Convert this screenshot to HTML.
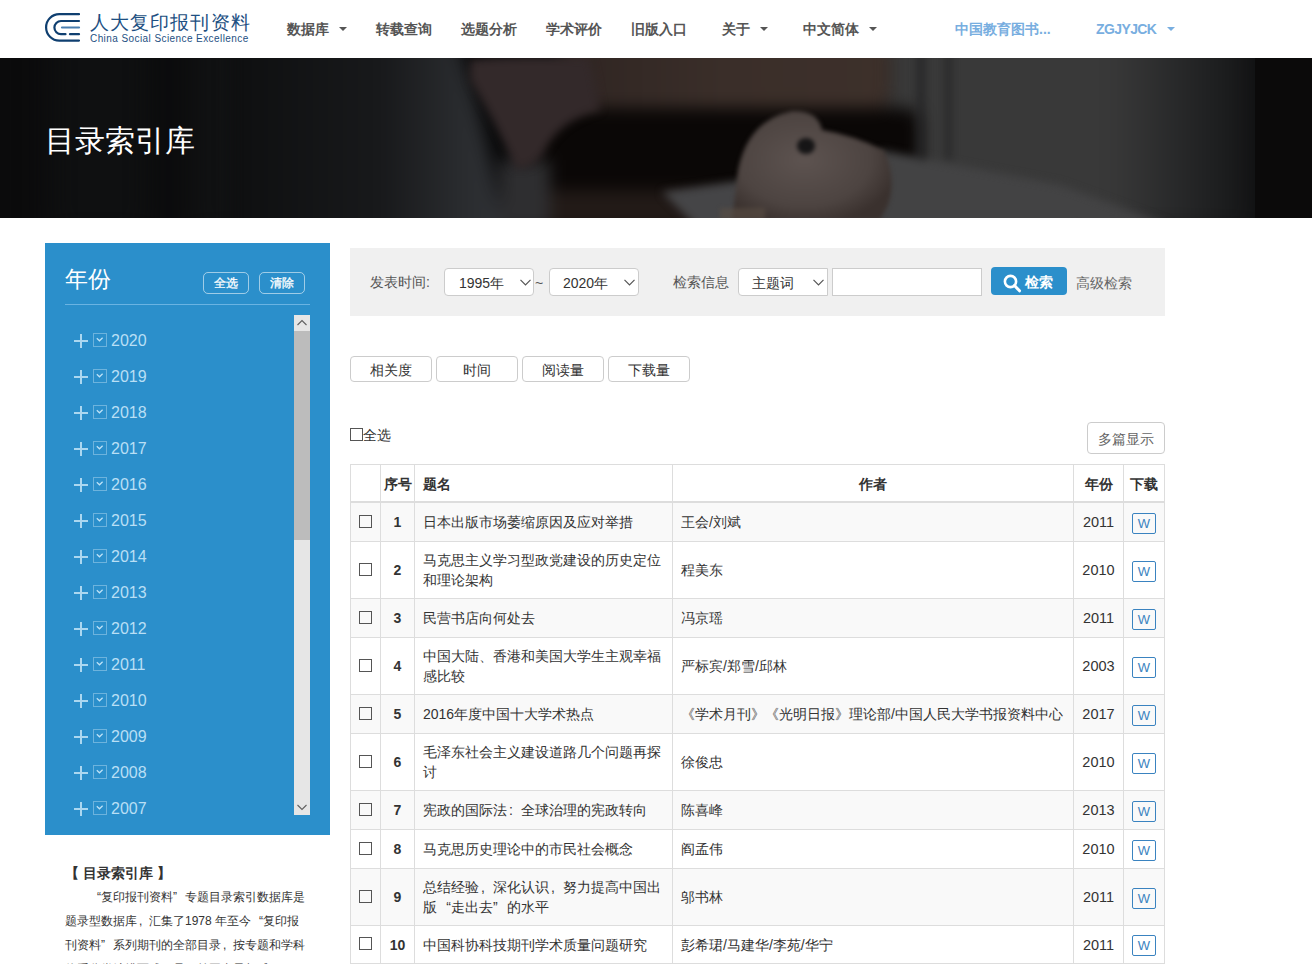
<!DOCTYPE html>
<html><head><meta charset="utf-8">
<style>
*{box-sizing:border-box;margin:0;padding:0}
html,body{width:1312px;height:964px;overflow:hidden;background:#fff}
body{font-family:"Liberation Sans",sans-serif;font-size:14px;color:#333;position:relative}
.abs{position:absolute;white-space:nowrap}
/* header */
.nav{position:absolute;top:20px;font-size:14px;font-weight:bold;color:#555;line-height:18px;white-space:nowrap}
.caret{display:inline-block;position:absolute;top:7px;width:0;height:0;border-top:4px solid #555;border-left:4px solid transparent;border-right:4px solid transparent}
/* banner */
#banner{position:absolute;left:0;top:58px;width:1312px;height:160px;overflow:hidden;background:#111}
/* panel */
#panel{position:absolute;left:45px;top:243px;width:285px;height:592px;background:#2b8fcb}
.pbtn{position:absolute;top:29px;width:46px;height:22px;border:1px solid rgba(255,255,255,.55);border-radius:5px;color:#fff;font-size:12px;line-height:20px;text-align:center;-webkit-text-stroke:0.3px #fff}
.yr{position:absolute;left:29px;height:20px}
.yr .plus{position:absolute;left:0;top:3px;width:14px;height:14px}
.yr .plus:before{content:"";position:absolute;left:0;top:6px;width:14px;height:2px;background:#abd7f0}
.yr .plus:after{content:"";position:absolute;left:6px;top:0;width:2px;height:14px;background:#abd7f0}
.yr .cb{position:absolute;left:19px;top:2px;width:14px;height:14px;border:1px solid rgba(190,225,245,.45)}
.yr .t{position:absolute;left:37px;top:0px;font-size:16px;line-height:20px;color:#b9dff5}
/* search */
#sbox{position:absolute;left:350px;top:248px;width:815px;height:68px;background:#f0f0f0}
.sel{position:absolute;top:20px;height:28px;background:#fff;border:1px solid #ccc;border-radius:4px;font-size:14px;color:#333;line-height:28px}
.chev{position:absolute;top:10px;width:11px;height:7px}
.sbtn{position:absolute;top:356px;width:82px;height:26px;border:1px solid #ccc;border-radius:4px;background:#fff;text-align:center;font-size:14px;line-height:27px;color:#333}
/* table */
#tbl{position:absolute;left:350px;top:464px;border-collapse:collapse;table-layout:fixed;width:814px}
#tbl td,#tbl th{border:1px solid #ddd;padding:0 8px;font-size:14px;line-height:20px;color:#333;vertical-align:middle}
#tbl th{font-weight:bold;padding-top:3px !important;border-bottom:2px solid #ddd}
#tbl tr.s td{background:#f9f9f9}
#tbl td.c{text-align:center}
.lq{display:inline-block;width:1em;text-align:right}
.rq{display:inline-block;width:1em;text-align:left}
.pc{display:inline-block;width:1em;text-align:left;padding-left:2px}
.rcb{display:inline-block;width:13px;height:13px;border:1px solid #555;vertical-align:middle;position:relative;top:-2px}
.w{display:inline-block;position:relative;top:1px;width:24px;height:21px;border:1px solid #3a83c0;border-radius:2px;color:#3a83c0;font-size:13px;line-height:19px;text-align:center;vertical-align:middle}
</style></head><body>

<!-- header -->
<svg class="abs" style="left:43px;top:10px" width="40" height="36" viewBox="43 10 40 36">
 <g fill="none" stroke="#0f3f70" stroke-width="2.2" stroke-linecap="round">
  <path d="M79 14.2 H59.3 A13.2 13.2 0 0 0 59.3 40.6 H79"/>
  <path d="M79 21 H61 A6.6 6.6 0 0 0 61 34.2 H65.5"/>
  <path d="M70 34.2 H79"/>
  <path d="M62 27.5 H79" stroke="#4a7fb0"/>
 </g>
</svg>
<div class="abs" style="left:90px;top:11px;font-size:18.5px;line-height:23px;color:#1d4f82;letter-spacing:1.1px">人大复印报刊资料</div>
<div class="abs" style="left:90px;top:33px;font-size:10px;letter-spacing:0.42px;line-height:12px;color:#1d4f82">China Social Science Excellence</div>

<div class="nav" style="left:287px">数据库<span class="caret" style="left:52px"></span></div>
<div class="nav" style="left:376px">转载查询</div>
<div class="nav" style="left:461px">选题分析</div>
<div class="nav" style="left:546px">学术评价</div>
<div class="nav" style="left:631px">旧版入口</div>
<div class="nav" style="left:722px">关于<span class="caret" style="left:38px"></span></div>
<div class="nav" style="left:803px">中文简体<span class="caret" style="left:66px"></span></div>
<div class="nav" style="left:955px;color:#78aee0">中国教育图书...</div>
<div class="nav" style="left:1096px;color:#78aee0;font-size:14px;letter-spacing:-0.6px">ZGJYJCK<span class="caret" style="left:71px;border-top-color:#78aee0"></span></div>

<!-- banner -->
<div id="banner">
<svg class="abs" style="left:0;top:0" width="1312" height="160" viewBox="0 58 1312 160">
 <defs>
  <filter id="b16" x="-50%" y="-50%" width="200%" height="200%" color-interpolation-filters="sRGB"><feGaussianBlur stdDeviation="16"/></filter>
  <filter id="b8" x="-50%" y="-50%" width="200%" height="200%" color-interpolation-filters="sRGB"><feGaussianBlur stdDeviation="8"/></filter>
  <filter id="b4" x="-50%" y="-50%" width="200%" height="200%" color-interpolation-filters="sRGB"><feGaussianBlur stdDeviation="4"/></filter>
  <filter id="b2" x="-50%" y="-50%" width="200%" height="200%" color-interpolation-filters="sRGB"><feGaussianBlur stdDeviation="2"/></filter>
  <linearGradient id="gR" x1="0" x2="1" y1="0" y2="0"><stop offset="0" stop-color="#393939"/><stop offset="0.5" stop-color="#262728"/><stop offset="1" stop-color="#131415"/></linearGradient>
  <linearGradient id="gShirt" x1="0" x2="1" y1="0" y2="0"><stop offset="0" stop-color="#0e0f10"/><stop offset="0.55" stop-color="#18191b"/><stop offset="0.85" stop-color="#2a2c2f"/><stop offset="1" stop-color="#303236"/></linearGradient>
  <radialGradient id="gHand" cx="0.45" cy="0.45" r="0.6"><stop offset="0" stop-color="#5d5350"/><stop offset="0.7" stop-color="#4d4441"/><stop offset="1" stop-color="#3a312e"/></radialGradient>
  <linearGradient id="gArm" x1="0" x2="1" y1="0" y2="0"><stop offset="0" stop-color="#2f2522"/><stop offset="0.5" stop-color="#3a2e29"/><stop offset="1" stop-color="#3d302a"/></linearGradient>
 </defs>
 <rect x="0" y="58" width="1312" height="160" fill="#0b0b0c"/>
 <g filter="url(#b16)">
  <rect x="50" y="20" width="100" height="220" fill="#0f1011"/>
  <rect x="190" y="20" width="120" height="220" fill="#111213"/>
  <rect x="870" y="20" width="280" height="220" fill="#393939"/>
  <rect x="1110" y="20" width="150" height="220" fill="url(#gR)"/>
 </g>
 <g filter="url(#b8)">
  <path d="M230 30 L452 30 Q482 110 505 240 L230 240 Z" fill="url(#gShirt)"/>
  <rect x="560" y="30" width="330" height="85" rx="25" fill="url(#gArm)"/>
  <rect x="530" y="108" width="390" height="84" rx="15" fill="#0a0706"/>
  <rect x="500" y="190" width="250" height="40" fill="#221a17"/>
  <rect x="500" y="160" width="50" height="70" fill="#2e2e30"/>
 </g>
 <g filter="url(#b4)">
  <path d="M470 60 Q520 55 590 58 L600 110 Q560 120 545 150 Q535 170 515 168 Q500 130 470 80 Z" fill="#33292a"/>
  <path d="M662 192 L900 158 L1070 205 L1075 230 L700 230 Z" fill="#454547"/>
  <path d="M880 150 L1060 185 L1170 225 L880 225 Z" fill="#434344"/>
  <rect x="918" y="40" width="6" height="120" fill="#222223"/>
  <rect x="946" y="40" width="5" height="120" fill="#242425"/>
 </g>
 <g filter="url(#b2)">
  <path d="M732 220 L738 170 Q748 120 792 111 Q818 110 822 130 Q852 135 884 150 Q897 178 888 205 L880 220 Z" fill="url(#gHand)"/>
  <ellipse cx="806" cy="146" rx="9" ry="8" fill="#161516"/>
  <rect x="720" y="208" width="45" height="12" fill="#5a4e45" opacity=".6"/>
 </g>
 <rect x="1255" y="58" width="57" height="160" fill="#0b0a0a"/>
</svg>
 <div class="abs" style="left:45px;top:63px;font-size:30px;line-height:40px;color:#fff">目录索引库</div>
</div>

<!-- left panel -->
<div id="panel">
 <div class="abs" style="left:20px;top:23px;font-size:23px;line-height:26px;color:#fff">年份</div>
 <div class="pbtn" style="left:158px">全选</div>
 <div class="pbtn" style="left:214px">清除</div>
 <div class="abs" style="left:20px;top:61px;width:245px;height:1px;background:#6ab3e2"></div>
 <div class="abs" style="left:249px;top:72px;width:16px;height:500px;background:#e6e6e6"></div>
 <div class="abs" style="left:249px;top:88px;width:16px;height:209px;background:#bcbcbc"></div>
 <svg class="abs" style="left:249px;top:72px" width="16" height="16"><path d="M3.5 10 L8 5.5 L12.5 10" fill="none" stroke="#606060" stroke-width="1.1"/></svg>
 <svg class="abs" style="left:249px;top:556px" width="16" height="16"><path d="M3.5 6 L8 10.5 L12.5 6" fill="none" stroke="#606060" stroke-width="1.1"/></svg>
 <div class="yr" style="top:88px"><span class="plus"></span><span class="cb"><svg width="11" height="11" style="position:absolute;left:0;top:0"><path d="M2.8 4.3 L5.5 6.8 L8.6 3.8" fill="none" stroke="#c0e3f7" stroke-width="1.2"/></svg></span><span class="t">2020</span></div>
<div class="yr" style="top:124px"><span class="plus"></span><span class="cb"><svg width="11" height="11" style="position:absolute;left:0;top:0"><path d="M2.8 4.3 L5.5 6.8 L8.6 3.8" fill="none" stroke="#c0e3f7" stroke-width="1.2"/></svg></span><span class="t">2019</span></div>
<div class="yr" style="top:160px"><span class="plus"></span><span class="cb"><svg width="11" height="11" style="position:absolute;left:0;top:0"><path d="M2.8 4.3 L5.5 6.8 L8.6 3.8" fill="none" stroke="#c0e3f7" stroke-width="1.2"/></svg></span><span class="t">2018</span></div>
<div class="yr" style="top:196px"><span class="plus"></span><span class="cb"><svg width="11" height="11" style="position:absolute;left:0;top:0"><path d="M2.8 4.3 L5.5 6.8 L8.6 3.8" fill="none" stroke="#c0e3f7" stroke-width="1.2"/></svg></span><span class="t">2017</span></div>
<div class="yr" style="top:232px"><span class="plus"></span><span class="cb"><svg width="11" height="11" style="position:absolute;left:0;top:0"><path d="M2.8 4.3 L5.5 6.8 L8.6 3.8" fill="none" stroke="#c0e3f7" stroke-width="1.2"/></svg></span><span class="t">2016</span></div>
<div class="yr" style="top:268px"><span class="plus"></span><span class="cb"><svg width="11" height="11" style="position:absolute;left:0;top:0"><path d="M2.8 4.3 L5.5 6.8 L8.6 3.8" fill="none" stroke="#c0e3f7" stroke-width="1.2"/></svg></span><span class="t">2015</span></div>
<div class="yr" style="top:304px"><span class="plus"></span><span class="cb"><svg width="11" height="11" style="position:absolute;left:0;top:0"><path d="M2.8 4.3 L5.5 6.8 L8.6 3.8" fill="none" stroke="#c0e3f7" stroke-width="1.2"/></svg></span><span class="t">2014</span></div>
<div class="yr" style="top:340px"><span class="plus"></span><span class="cb"><svg width="11" height="11" style="position:absolute;left:0;top:0"><path d="M2.8 4.3 L5.5 6.8 L8.6 3.8" fill="none" stroke="#c0e3f7" stroke-width="1.2"/></svg></span><span class="t">2013</span></div>
<div class="yr" style="top:376px"><span class="plus"></span><span class="cb"><svg width="11" height="11" style="position:absolute;left:0;top:0"><path d="M2.8 4.3 L5.5 6.8 L8.6 3.8" fill="none" stroke="#c0e3f7" stroke-width="1.2"/></svg></span><span class="t">2012</span></div>
<div class="yr" style="top:412px"><span class="plus"></span><span class="cb"><svg width="11" height="11" style="position:absolute;left:0;top:0"><path d="M2.8 4.3 L5.5 6.8 L8.6 3.8" fill="none" stroke="#c0e3f7" stroke-width="1.2"/></svg></span><span class="t">2011</span></div>
<div class="yr" style="top:448px"><span class="plus"></span><span class="cb"><svg width="11" height="11" style="position:absolute;left:0;top:0"><path d="M2.8 4.3 L5.5 6.8 L8.6 3.8" fill="none" stroke="#c0e3f7" stroke-width="1.2"/></svg></span><span class="t">2010</span></div>
<div class="yr" style="top:484px"><span class="plus"></span><span class="cb"><svg width="11" height="11" style="position:absolute;left:0;top:0"><path d="M2.8 4.3 L5.5 6.8 L8.6 3.8" fill="none" stroke="#c0e3f7" stroke-width="1.2"/></svg></span><span class="t">2009</span></div>
<div class="yr" style="top:520px"><span class="plus"></span><span class="cb"><svg width="11" height="11" style="position:absolute;left:0;top:0"><path d="M2.8 4.3 L5.5 6.8 L8.6 3.8" fill="none" stroke="#c0e3f7" stroke-width="1.2"/></svg></span><span class="t">2008</span></div>
<div class="yr" style="top:556px"><span class="plus"></span><span class="cb"><svg width="11" height="11" style="position:absolute;left:0;top:0"><path d="M2.8 4.3 L5.5 6.8 L8.6 3.8" fill="none" stroke="#c0e3f7" stroke-width="1.2"/></svg></span><span class="t">2007</span></div>

</div>

<div class="abs" style="left:65px;top:864px;font-size:14px;font-weight:bold;line-height:18px;color:#333">【 目录索引库 】</div>
<div class="abs" style="left:65px;top:885px;font-size:12px;line-height:24px;color:#333">
 <div style="padding-left:24px"><span class="lq">“</span>复印报刊资料<span class="rq">”</span>专题目录索引数据库是</div>
 <div>题录型数据库<span class="pc">,</span>汇集了1978 年至今<span class="lq">“</span>复印报</div>
 <div>刊资料<span class="rq">”</span>系列期刊的全部目录<span class="pc">,</span>按专题和学科</div>
 <div>体系分类编排而成<span class="pc">,</span>是目前国内最权威</div>
</div>

<!-- search -->
<div id="sbox">
 <div class="abs" style="left:20px;top:26px;color:#555">发表时间:</div>
 <div class="sel" style="left:94px;width:90px"><span class="abs" style="left:14px">1995年</span><svg class="chev" style="left:75px" viewBox="0 0 11 7"><path d="M0.5 0.8 L5.5 5.8 L10.5 0.8" fill="none" stroke="#555" stroke-width="1.2"/></svg></div>
 <div class="abs" style="left:185px;top:27px;color:#555">~</div>
 <div class="sel" style="left:199px;width:90px"><span class="abs" style="left:13px">2020年</span><svg class="chev" style="left:74px" viewBox="0 0 11 7"><path d="M0.5 0.8 L5.5 5.8 L10.5 0.8" fill="none" stroke="#555" stroke-width="1.2"/></svg></div>
 <div class="abs" style="left:323px;top:26px;color:#555">检索信息</div>
 <div class="sel" style="left:388px;width:90px;border-radius:4px 0 0 4px"><span class="abs" style="left:13px">主题词</span><svg class="chev" style="left:74px" viewBox="0 0 11 7"><path d="M0.5 0.8 L5.5 5.8 L10.5 0.8" fill="none" stroke="#555" stroke-width="1.2"/></svg></div>
 <div class="sel" style="left:482px;width:150px;border-radius:0"></div>
 <div class="abs" style="left:641px;top:19px;width:76px;height:28px;background:#2b8fcb;border-radius:4px"><svg class="abs" style="left:12px;top:7px" width="20" height="19"><circle cx="7.5" cy="7.5" r="5.6" fill="none" stroke="#fff" stroke-width="2.6"/><path d="M11.5 11.5 L16.5 16.8" stroke="#fff" stroke-width="3" stroke-linecap="round"/></svg><span class="abs" style="left:34px;top:6px;color:#fff;font-weight:bold;font-size:14px;line-height:18px">检索</span></div>
 <div class="abs" style="left:726px;top:27px;color:#666">高级检索</div>
</div>

<div class="sbtn" style="left:350px">相关度</div>
<div class="sbtn" style="left:436px">时间</div>
<div class="sbtn" style="left:522px">阅读量</div>
<div class="sbtn" style="left:608px">下载量</div>

<div class="abs" style="left:350px;top:428px;width:13px;height:13px;border:1px solid #555"></div>
<div class="abs" style="left:363px;top:426px;font-size:14px;line-height:18px;color:#333">全选</div>
<div class="abs" style="left:1087px;top:422px;width:78px;height:32px;border:1px solid #ccc;border-radius:4px;font-size:14px;line-height:32px;text-align:center;color:#666">多篇显示</div>

<table id="tbl">
 <colgroup><col style="width:30px"><col style="width:34px"><col style="width:258px"><col style="width:401px"><col style="width:50px"><col style="width:41px"></colgroup>
 <tbody>
<tr style="height:37px"><th></th><th class="c" style="padding:0">序号</th><th style="text-align:left">题名</th><th style="text-align:center">作者</th><th style="text-align:center;padding:0">年份</th><th style="text-align:center;padding:0">下载</th></tr>
<tr class="s" style="height:40px"><td class="c" style="padding:0"><span class="rcb"></span></td><td class="c" style="padding:0;font-weight:bold">1</td><td>日本出版市场萎缩原因及应对举措</td><td style="white-space:nowrap">王会/刘斌</td><td class="c" style="padding:0;font-size:14.5px">2011</td><td class="c" style="padding:0"><span class="w">W</span></td></tr>
<tr style="height:57px"><td class="c" style="padding:0"><span class="rcb"></span></td><td class="c" style="padding:0;font-weight:bold">2</td><td>马克思主义学习型政党建设的历史定位和理论架构</td><td style="white-space:nowrap">程美东</td><td class="c" style="padding:0;font-size:14.5px">2010</td><td class="c" style="padding:0"><span class="w">W</span></td></tr>
<tr class="s" style="height:39px"><td class="c" style="padding:0"><span class="rcb"></span></td><td class="c" style="padding:0;font-weight:bold">3</td><td>民营书店向何处去</td><td style="white-space:nowrap">冯京瑶</td><td class="c" style="padding:0;font-size:14.5px">2011</td><td class="c" style="padding:0"><span class="w">W</span></td></tr>
<tr style="height:57px"><td class="c" style="padding:0"><span class="rcb"></span></td><td class="c" style="padding:0;font-weight:bold">4</td><td>中国大陆、香港和美国大学生主观幸福感比较</td><td style="white-space:nowrap">严标宾/郑雪/邱林</td><td class="c" style="padding:0;font-size:14.5px">2003</td><td class="c" style="padding:0"><span class="w">W</span></td></tr>
<tr class="s" style="height:39px"><td class="c" style="padding:0"><span class="rcb"></span></td><td class="c" style="padding:0;font-weight:bold">5</td><td>2016年度中国十大学术热点</td><td style="white-space:nowrap">《学术月刊》《光明日报》理论部/中国人民大学书报资料中心</td><td class="c" style="padding:0;font-size:14.5px">2017</td><td class="c" style="padding:0"><span class="w">W</span></td></tr>
<tr style="height:57px"><td class="c" style="padding:0"><span class="rcb"></span></td><td class="c" style="padding:0;font-weight:bold">6</td><td>毛泽东社会主义建设道路几个问题再探讨</td><td style="white-space:nowrap">徐俊忠</td><td class="c" style="padding:0;font-size:14.5px">2010</td><td class="c" style="padding:0"><span class="w">W</span></td></tr>
<tr class="s" style="height:39px"><td class="c" style="padding:0"><span class="rcb"></span></td><td class="c" style="padding:0;font-weight:bold">7</td><td>宪政的国际法<span class="pc">:</span>全球治理的宪政转向</td><td style="white-space:nowrap">陈喜峰</td><td class="c" style="padding:0;font-size:14.5px">2013</td><td class="c" style="padding:0"><span class="w">W</span></td></tr>
<tr style="height:39px"><td class="c" style="padding:0"><span class="rcb"></span></td><td class="c" style="padding:0;font-weight:bold">8</td><td>马克思历史理论中的市民社会概念</td><td style="white-space:nowrap">阎孟伟</td><td class="c" style="padding:0;font-size:14.5px">2010</td><td class="c" style="padding:0"><span class="w">W</span></td></tr>
<tr class="s" style="height:57px"><td class="c" style="padding:0"><span class="rcb"></span></td><td class="c" style="padding:0;font-weight:bold">9</td><td>总结经验<span class="pc">,</span>深化认识<span class="pc">,</span>努力提高中国出版<span class="lq">“</span>走出去<span class="rq">”</span>的水平</td><td style="white-space:nowrap">邬书林</td><td class="c" style="padding:0;font-size:14.5px">2011</td><td class="c" style="padding:0"><span class="w">W</span></td></tr>
<tr style="height:38px"><td class="c" style="padding:0"><span class="rcb"></span></td><td class="c" style="padding:0;font-weight:bold">10</td><td>中国科协科技期刊学术质量问题研究</td><td style="white-space:nowrap">彭希珺/马建华/李苑/华宁</td><td class="c" style="padding:0;font-size:14.5px">2011</td><td class="c" style="padding:0"><span class="w">W</span></td></tr>
</tbody>
</table>

</body></html>
